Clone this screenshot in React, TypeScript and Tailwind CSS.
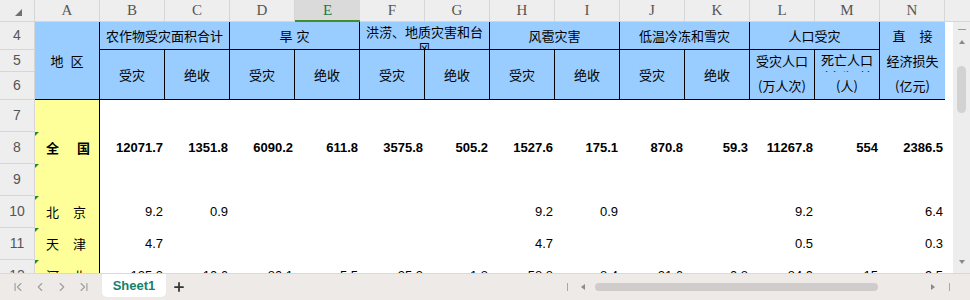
import { ChevronFirst, ChevronLast, ChevronLeft, ChevronRight, Plus } from "lucide-react";

const COLS = ["A", "B", "C", "D", "E", "F", "G", "H", "I", "J", "K", "L", "M", "N"];

const ROW_NUMS = [
  { n: 4, h: "h-[28px]" },
  { n: 5, h: "h-[22px]" },
  { n: 6, h: "h-[28px]" },
  { n: 7, h: "h-[32px]" },
  { n: 8, h: "h-[32px]" },
  { n: 9, h: "h-[32px]" },
  { n: 10, h: "h-[32px]" },
  { n: 11, h: "h-[32px]" },
  { n: 12, h: "h-[32px]" },
];

type Row = { name?: [string, string]; bold?: boolean; flag?: boolean; values: string[] };

const DATA: Row[] = [
  { values: [] },
  {
    name: ["全", "国"],
    bold: true,
    flag: true,
    values: ["12071.7", "1351.8", "6090.2", "611.8", "3575.8", "505.2", "1527.6", "175.1", "870.8", "59.3", "11267.8", "554", "2386.5"],
  },
  { flag: true, values: [] },
  { name: ["北", "京"], flag: true, values: ["9.2", "0.9", "", "", "", "", "9.2", "0.9", "", "", "9.2", "", "6.4"] },
  { name: ["天", "津"], flag: true, values: ["4.7", "", "", "", "", "", "4.7", "", "", "", "0.5", "", "0.3"] },
  {
    name: ["河", "北"],
    flag: true,
    values: ["125.3", "10.6", "80.1", "5.5", "25.3", "1.8", "58.8", "8.4", "21.6", "0.8", "84.9", "15", "9.5"],
  },
];

// 受灾 / 绝收 pairs under each disaster group (columns B..K)
const SUB_CELLS = [
  { col: "col-start-2", text: "受灾" },
  { col: "col-start-3", text: "绝收" },
  { col: "col-start-4", text: "受灾" },
  { col: "col-start-5", text: "绝收" },
  { col: "col-start-6", text: "受灾" },
  { col: "col-start-7", text: "绝收" },
  { col: "col-start-8", text: "受灾" },
  { col: "col-start-9", text: "绝收" },
  { col: "col-start-10", text: "受灾" },
  { col: "col-start-11", text: "绝收" },
];

const cell = "flex items-center justify-center border-r border-b border-black";

const HeaderBlock = () => (
  <div className="grid grid-cols-[repeat(14,65px)] grid-rows-[28px_22px_28px] bg-[#99ccff] text-[13px] text-black font-['Noto_Sans_CJK_SC',sans-serif]">
    <div className={`${cell} col-start-1 row-start-1 row-span-3 gap-[7px]`}>
      <span>地</span>
      <span>区</span>
    </div>
    <div className={`${cell} col-start-2 col-span-2 row-start-1`}>农作物受灾面积合计</div>
    <div className={`${cell} col-start-4 col-span-2 row-start-1 gap-[4px]`}>
      <span>旱</span>
      <span>灾</span>
    </div>
    <div className="col-start-6 col-span-2 row-start-1 border-r border-b border-black overflow-hidden">
      <div className="pt-[2px] text-center leading-[16px]">
        洪涝、地质灾害和台
        <br />
        风
      </div>
    </div>
    <div className={`${cell} col-start-8 col-span-2 row-start-1`}>风雹灾害</div>
    <div className={`${cell} col-start-10 col-span-2 row-start-1`}>低温冷冻和雪灾</div>
    <div className={`${cell} col-start-12 col-span-2 row-start-1`}>人口受灾</div>
    <div className="col-start-14 row-start-1 row-span-3 border-b border-black flex flex-col">
      <div className="h-[28px] flex items-center justify-center gap-[14px]">
        <span>直</span>
        <span>接</span>
      </div>
      <div className="h-[22px] flex items-center justify-center">经济损失</div>
      <div className="h-[27px] flex items-center justify-center">(亿元)</div>
    </div>

    {SUB_CELLS.map((c) => (
      <div key={c.col} className={`${cell} ${c.col} row-start-2 row-span-2`}>
        {c.text}
      </div>
    ))}

    <div className="col-start-12 row-start-2 border-r border-black flex items-center justify-center">受灾人口</div>
    <div className={`${cell} col-start-12 row-start-3`}>(万人次)</div>
    <div className="col-start-13 row-start-2 border-r border-black overflow-hidden">
      <div className="pt-px text-center leading-[17px]">
        死亡人口
        <br />
        （含失踪）
      </div>
    </div>
    <div className={`${cell} col-start-13 row-start-3`}>(人)</div>
  </div>
);

const DataRow = ({ row }: { row: Row }) => (
  <div className="flex h-[32px] text-[13px] text-black">
    <div className="relative w-[65px] shrink-0 bg-[#ffff99] border-r border-black flex items-center pl-[11px] font-['Noto_Sans_CJK_SC',sans-serif]">
      {row.flag && (
        <div className="absolute left-0 top-0 w-0 h-0 border-t-[4px] border-t-[#1f8a32] border-r-[4px] border-r-transparent" />
      )}
      {row.name && (
        <div className={`flex ${row.bold ? "gap-[18px] font-bold" : "gap-[14px]"}`}>
          <span>{row.name[0]}</span>
          <span>{row.name[1]}</span>
        </div>
      )}
    </div>
    {COLS.slice(1).map((c, i) => (
      <div
        key={c}
        className={`w-[65px] shrink-0 flex items-center justify-end pr-[2px] font-['Liberation_Sans',Arial,sans-serif] ${
          row.bold ? "font-bold" : ""
        }`}
      >
        {row.values[i] || ""}
      </div>
    ))}
  </div>
);

const ScrollTri = ({ dir }: { dir: "left" | "right" | "up" | "down" }) => {
  if (dir === "left")
    return <div className="w-0 h-0 border-y-[3px] border-y-transparent border-r-[4px] border-r-[#8a8a8a]" />;
  if (dir === "right")
    return <div className="w-0 h-0 border-y-[3px] border-y-transparent border-l-[4px] border-l-[#8a8a8a]" />;
  if (dir === "up")
    return <div className="w-0 h-0 border-x-[3px] border-x-transparent border-b-[4px] border-b-[#8a8a8a]" />;
  return <div className="w-0 h-0 border-x-[3px] border-x-transparent border-t-[4px] border-t-[#8a8a8a]" />;
};

export default function App() {
  return (
    <div className="w-[970px] h-[300px] flex flex-col overflow-hidden bg-white">
      {/* column letters */}
      <div className="h-[22px] shrink-0 flex bg-[#eeeeee] border-b border-[#d6d6d6] text-[15px] text-[#555] font-['Liberation_Serif',serif]">
        <div className="w-[35px] shrink-0 relative border-r border-[#d6d6d6]">
          <svg className="absolute left-[15px] top-[9px]" width="7" height="7" viewBox="0 0 7 7">
            <polygon points="7,0 7,7 0,7" fill="#707070" />
          </svg>
        </div>
        {COLS.map((c) =>
          c === "E" ? (
            <div
              key={c}
              className="w-[65px] shrink-0 flex items-center justify-center bg-[#dadada] border-b-2 border-[#3f8f2c] text-[#18794a] -mb-px"
            >
              {c}
            </div>
          ) : (
            <div key={c} className="w-[65px] shrink-0 flex items-center justify-center border-r border-[#d6d6d6]">
              {c}
            </div>
          )
        )}
        <div className="flex-1" />
      </div>

      {/* sheet body */}
      <div className="h-[251px] shrink-0 flex overflow-hidden">
        <div className="w-[35px] shrink-0 bg-[#eeeeee] border-r border-[#d6d6d6] text-[14px] text-[#555] font-['Liberation_Sans',Arial,sans-serif]">
          {ROW_NUMS.map((r) => (
            <div key={r.n} className={`${r.h} flex items-center justify-center border-b border-[#d6d6d6]`}>
              {r.n}
            </div>
          ))}
        </div>
        <div className="w-[910px] shrink-0">
          <HeaderBlock />
          {DATA.map((row, i) => (
            <DataRow key={i} row={row} />
          ))}
        </div>
        <div className="w-[8px] shrink-0 bg-white" />
        <div className="w-[17px] shrink-0 bg-[#ededed] flex flex-col items-center">
          <div className="mt-[7px] w-[8px] h-px bg-[#9a9a9a]" />
          <div className="mt-[10px]">
            <ScrollTri dir="up" />
          </div>
          <div className="mt-[22px] w-[9px] h-[47px] rounded-full bg-[#d2d2d2]" />
          <div className="mt-auto mb-[9px]">
            <ScrollTri dir="down" />
          </div>
        </div>
      </div>

      {/* sheet tabs + horizontal scroll */}
      <div className="h-[27px] shrink-0 flex bg-[#eeeae8] border-t border-[#dcd8d6]">
        <div className="w-[102px] shrink-0 flex items-center pl-[11px] gap-[8px] text-[#a0a0a0]">
          <ChevronFirst size={14} strokeWidth={2} />
          <ChevronLeft size={14} strokeWidth={2} />
          <ChevronRight size={14} strokeWidth={2} />
          <ChevronLast size={14} strokeWidth={2} />
        </div>
        <div className="w-[64px] h-[23px] shrink-0 bg-white rounded-b-[5px] flex items-center justify-center text-[13px] font-bold text-[#17806a] font-['Liberation_Sans',Arial,sans-serif]">
          Sheet1
        </div>
        <div className="ml-[6px] flex items-center text-[#333]">
          <Plus size={14} strokeWidth={3} />
        </div>
        <div className="ml-auto w-[408px] shrink-0 flex items-center pl-[5px]">
          <div className="w-px h-[8px] bg-[#a8a8a8]" />
          <div className="ml-[13px]">
            <ScrollTri dir="left" />
          </div>
          <div className="ml-[10px] w-[283px] h-[8px] rounded-full bg-[#d0cccb]" />
          <div className="ml-[53px]">
            <ScrollTri dir="right" />
          </div>
          <div className="ml-[14px] w-px h-[8px] bg-[#a8a8a8]" />
        </div>
      </div>
    </div>
  );
}
